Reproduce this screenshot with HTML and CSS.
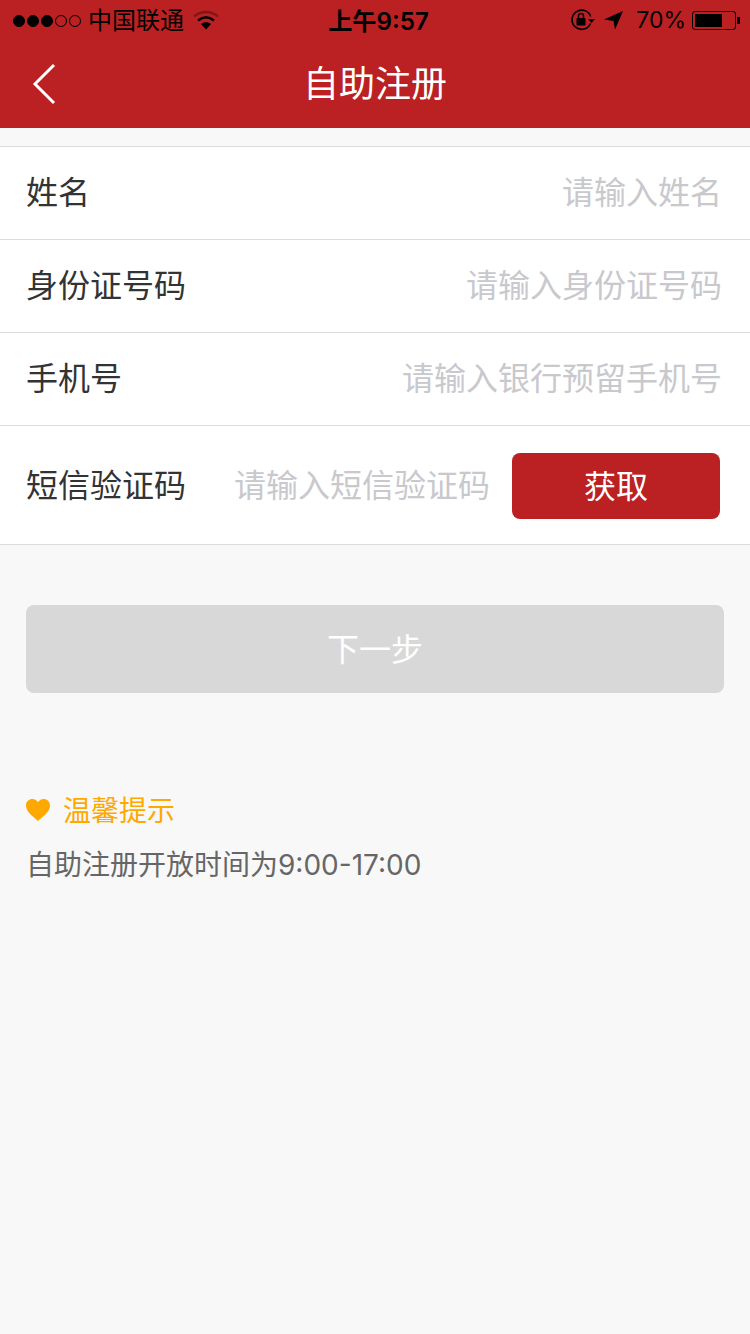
FILE: index.html
```html
<!DOCTYPE html>
<html lang="zh-CN">
<head>
    <meta charset="UTF-8">
    <meta name="viewport" content="width=device-width, initial-scale=1.0">
    <title>自助注册</title>
    <link rel="stylesheet" href="styles.css">
</head>
<body>
    <header class="top-bar">
        <div class="status-bar">
            <div class="status-left">
                <span class="signal">
                    <i class="dot on"></i><i class="dot on"></i><i class="dot on"></i><i class="dot"></i><i class="dot"></i>
                </span>
                <span class="carrier">中国联通</span>
                <svg class="wifi" width="26" height="20" viewBox="0 0 26 20">
                    <path d="M1 6.500C8 .5 18 .5 25 6.500" fill="none" stroke="#000" stroke-opacity="0.3" stroke-width="2.500"/>
                    <path d="M5 10.500C10 6.500 16 6.500 21 10.500" fill="none" stroke="#000" stroke-width="2.500"/>
                    <path d="M8 14C11 11.500 15 11.500 18 14L13 19.500Z" fill="#000"/>
                </svg>
            </div>
            <div class="status-time">上午9:57</div>
            <div class="status-right">
                <svg class="lock" width="26" height="24" viewBox="0 0 26 24">
                    <path d="M20.500 15.500A9.600 9.600 0 1 1 20.700 8.500" fill="none" stroke="#000" stroke-width="1.600"/>
                    <path d="M18 11H25L21.500 15Z" fill="#000"/>
                    <rect x="6.500" y="10" width="9" height="7.500" rx="1" fill="#000"/>
                    <path d="M8.500 10V8a2.500 2.500 0 0 1 5 0V10" fill="none" stroke="#000" stroke-width="1.500"/>
                </svg>
                <svg class="arrow" width="20" height="20" viewBox="0 0 20 20">
                    <path d="M0 9.500L19 1L11 19.500L9.500 11Z" fill="#000"/>
                </svg>
                <span class="percent">70%</span>
                <span class="battery"><span class="battery-level"></span></span>
                <span class="battery-cap"></span>
            </div>
        </div>
        <div class="nav-bar">
            <svg class="back" width="24" height="42" viewBox="0 0 24 42">
                <path d="M22 2L3 21L22 40" fill="none" stroke="#fff" stroke-width="3"/>
            </svg>
            <h1>自助注册</h1>
        </div>
    </header>

    <form class="reg-form">
        <div class="row">
            <label>姓名</label>
            <span class="placeholder">请输入姓名</span>
        </div>
        <div class="row">
            <label>身份证号码</label>
            <span class="placeholder">请输入身份证号码</span>
        </div>
        <div class="row">
            <label>手机号</label>
            <span class="placeholder">请输入银行预留手机号</span>
        </div>
        <div class="row row-code">
            <label>短信验证码</label>
            <span class="placeholder">请输入短信验证码</span>
            <button type="button" class="get-code">获取</button>
        </div>
    </form>

    <button type="button" class="next-btn">下一步</button>

    <section class="tips">
        <div class="tips-title">
            <svg width="24" height="24" viewBox="0 0 24 24">
                <path d="M12 23C7 18.500 0 14 0 7.500C0 3.500 3 1 6.500 1C9 1 11 2.300 12 4.300C13 2.300 15 1 17.500 1C21 1 24 3.500 24 7.500C24 14 17 18.500 12 23Z" fill="#ffa800"/>
            </svg>
            <span>温馨提示</span>
        </div>
        <p>自助注册开放时间为9:00-17:00</p>
    </section>
</body>
</html>
```

FILE: styles.css
```css
* {
    box-sizing: border-box;
}

body {
    margin: 0;
    height: 1334px;
    overflow: hidden;
    background-color: #f8f8f8;
    font-family: Inter, "Noto Sans CJK SC", sans-serif;
}

.top-bar {
    height: 128px;
    background-color: #bb2022;
}

.status-bar {
    height: 40px;
    display: flex;
    justify-content: space-between;
    align-items: center;
    padding: 0 10px 0 13px;
    color: #000;
}

.status-left,
.status-right {
    width: 260px;
    display: flex;
    align-items: center;
}

.status-right {
    justify-content: flex-end;
}

.signal {
    display: flex;
    gap: 2px;
    margin-top: 1px;
}

.dot {
    width: 12px;
    height: 12px;
    border: 1px solid #000;
    border-radius: 50%;
}

.dot.on {
    background-color: #000;
}

.carrier {
    margin-left: 7px;
    margin-bottom: 3px;
    font-size: 24px;
    white-space: nowrap;
}

.wifi {
    margin-left: 9px;
}

.status-time {
    margin-bottom: 2px;
    margin-left: 4px;
    font-size: 24.200px;
    font-weight: 600;
    white-space: nowrap;
}

.arrow {
    margin-left: 8px;
}

.percent {
    margin-left: 12px;
    font-size: 23px;
}

.battery {
    width: 44px;
    height: 19px;
    margin-left: 6px;
    padding: 2px;
    border: 1px solid #000;
    border-radius: 3px;
}

.battery-level {
    display: block;
    width: 27px;
    height: 100%;
    background-color: #000;
}

.battery-cap {
    width: 3px;
    height: 7px;
    margin-left: 1px;
    background-color: #000;
}

.nav-bar {
    position: relative;
    height: 88px;
    display: flex;
    justify-content: center;
    align-items: center;
}

.nav-bar h1 {
    margin: 0 0 6px;
    color: #fff;
    font-size: 36px;
    font-weight: 400;
}

.back {
    position: absolute;
    left: 32px;
    top: 23px;
}

.reg-form {
    margin-top: 18px;
    background-color: #fff;
    border-top: 1px solid #dcdcdc;
}

.row {
    height: 93px;
    display: flex;
    justify-content: space-between;
    align-items: center;
    padding: 0 28px 0 26px;
    border-bottom: 1px solid #dcdcdc;
}

.row label,
.placeholder {
    margin-bottom: 7px;
    font-size: 32px;
    white-space: nowrap;
}

.row label {
    color: #333;
}

.placeholder {
    color: #c8c8cd;
}

.row-code {
    height: 119px;
    padding-right: 30px;
}

.row-code label,
.row-code .placeholder {
    margin-bottom: 5px;
}

.row-code .placeholder {
    margin-left: 48px;
}

.get-code {
    flex-shrink: 0;
    width: 208px;
    height: 66px;
    margin: 2px 0 0 22px;
    padding-bottom: 6px;
    border: none;
    border-radius: 8px;
    background-color: #bb2022;
    color: #fff;
    font-family: inherit;
    font-size: 32px;
}

.next-btn {
    display: block;
    width: 698px;
    height: 88px;
    margin: 60px 26px 0;
    padding-bottom: 6px;
    border: none;
    border-radius: 8px;
    background-color: #d8d8d8;
    color: #fff;
    font-family: inherit;
    font-size: 32px;
}

.tips {
    margin-top: 96px;
    padding: 0 26px;
}

.tips-title {
    display: flex;
    align-items: center;
    gap: 13px;
    color: #ffa800;
    font-size: 28px;
}

.tips-title span {
    margin-bottom: 2px;
}

.tips p {
    margin: 12px 0 0;
    color: #666;
    font-size: 28px;
}
```
